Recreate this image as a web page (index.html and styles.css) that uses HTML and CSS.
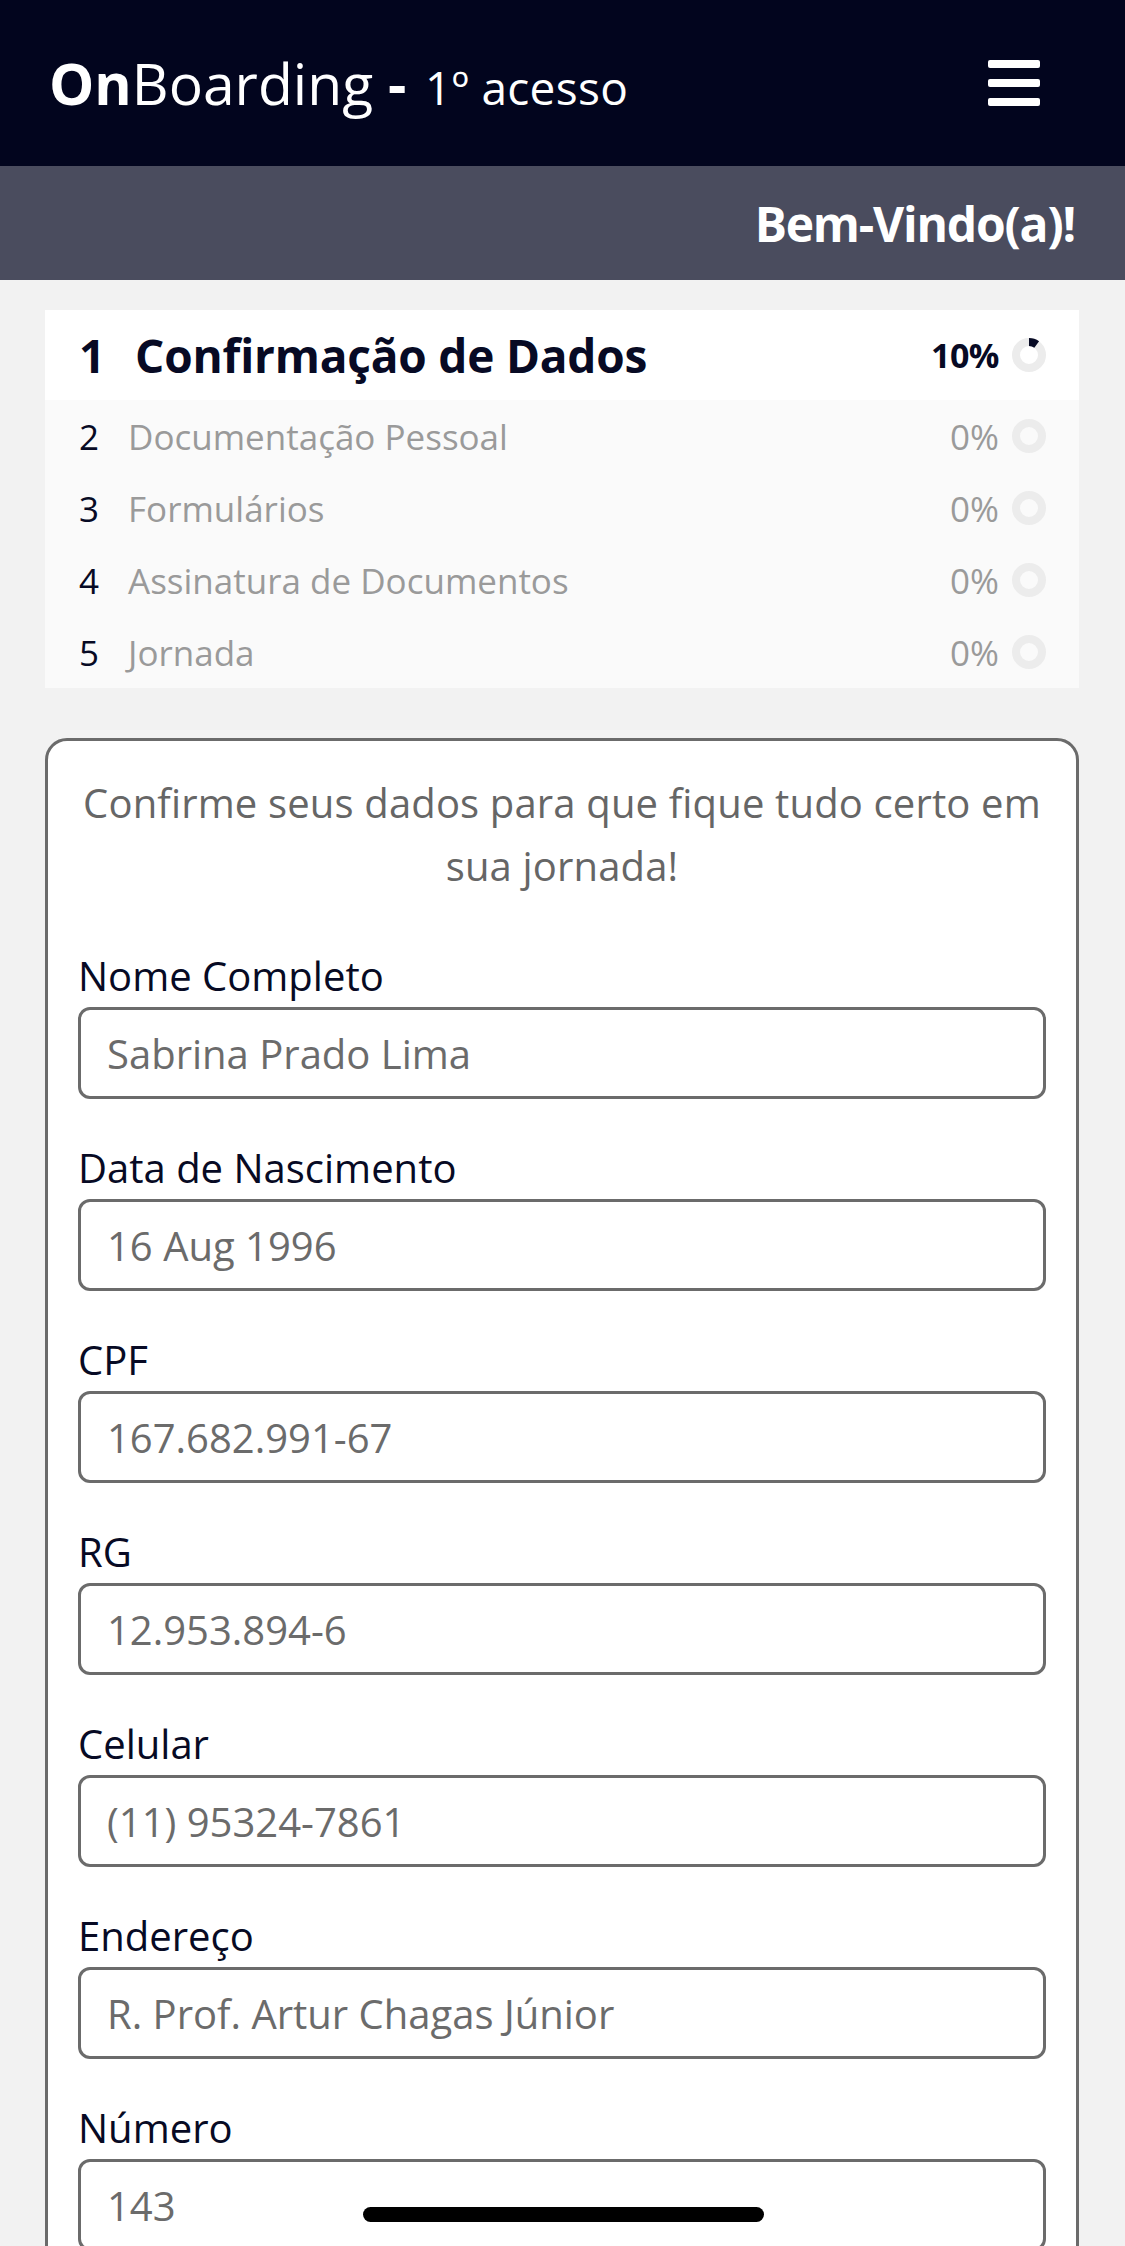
FILE: index.html
```html
<!DOCTYPE html>
<html lang="pt-BR">
<head>
<meta charset="utf-8">
<title>OnBoarding - 1º acesso</title>
<link rel="stylesheet" href="styles.css">
</head>
<body>
<header class="topbar">
  <div class="brand"><b>On</b>Boarding <b>-</b> <span class="brand-sub">1º acesso</span></div>
  <div class="burger" aria-label="menu"><span></span><span></span><span></span></div>
</header>
<div class="welcome">Bem-Vindo(a)!</div>

<main class="main">
  <section class="steps">
    <div class="step step-active">
      <span class="step-num">1</span>
      <span class="step-name">Confirmação de Dados</span>
      <span class="step-pct">10%</span>
      <svg class="ring" viewBox="0 0 36 36" width="36" height="36"><circle cx="18" cy="18" r="13" fill="none" stroke="#ececec" stroke-width="8"/><circle cx="18" cy="18" r="13" fill="none" stroke="#070a24" stroke-width="8" stroke-dasharray="8.2 81.7" transform="rotate(-90 18 18)"/></svg>
    </div>
    <div class="step">
      <span class="step-num">2</span>
      <span class="step-name">Documentação Pessoal</span>
      <span class="step-pct">0%</span>
      <svg class="ring" viewBox="0 0 36 36" width="36" height="36"><circle cx="18" cy="18" r="13" fill="none" stroke="#ececec" stroke-width="8"/></svg>
    </div>
    <div class="step">
      <span class="step-num">3</span>
      <span class="step-name">Formulários</span>
      <span class="step-pct">0%</span>
      <svg class="ring" viewBox="0 0 36 36" width="36" height="36"><circle cx="18" cy="18" r="13" fill="none" stroke="#ececec" stroke-width="8"/></svg>
    </div>
    <div class="step">
      <span class="step-num">4</span>
      <span class="step-name">Assinatura de Documentos</span>
      <span class="step-pct">0%</span>
      <svg class="ring" viewBox="0 0 36 36" width="36" height="36"><circle cx="18" cy="18" r="13" fill="none" stroke="#ececec" stroke-width="8"/></svg>
    </div>
    <div class="step">
      <span class="step-num">5</span>
      <span class="step-name">Jornada</span>
      <span class="step-pct">0%</span>
      <svg class="ring" viewBox="0 0 36 36" width="36" height="36"><circle cx="18" cy="18" r="13" fill="none" stroke="#ececec" stroke-width="8"/></svg>
    </div>
  </section>

  <form class="card">
    <p class="intro">Confirme seus dados para que fique tudo certo em sua jornada!</p>
    <div class="fields">
      <label class="field"><span class="field-label">Nome Completo</span><input class="field-input" type="text" value="Sabrina Prado Lima" readonly></label>
      <label class="field"><span class="field-label">Data de Nascimento</span><input class="field-input" type="text" value="16 Aug 1996" readonly></label>
      <label class="field"><span class="field-label">CPF</span><input class="field-input" type="text" value="167.682.991-67" readonly></label>
      <label class="field"><span class="field-label">RG</span><input class="field-input" type="text" value="12.953.894-6" readonly></label>
      <label class="field"><span class="field-label">Celular</span><input class="field-input" type="text" value="(11) 95324-7861" readonly></label>
      <label class="field"><span class="field-label">Endereço</span><input class="field-input" type="text" value="R. Prof. Artur Chagas Júnior" readonly></label>
      <label class="field"><span class="field-label">Número</span><input class="field-input" type="text" value="143" readonly></label>
    </div>
  </form>
</main>

<div class="home-indicator"></div>
</body>
</html>
```

FILE: styles.css
```css
* { box-sizing: border-box; }

html, body {
  margin: 0;
  padding: 0;
}

body {
  background: #f2f2f2;
  font-family: "Open Sans", "Noto Sans", sans-serif;
  color: #070a24;
}

.topbar {
  height: 166px;
  background: #02051e;
  display: flex;
  align-items: center;
  justify-content: space-between;
  padding: 0 85px 0 49px;
}

.brand {
  color: #fff;
  font-size: 57px;
  line-height: 1;
  font-weight: 400;
  white-space: nowrap;
}

.brand b { font-weight: 700; }

.brand-sub {
  font-size: 46px;
  margin-left: 4px;
  letter-spacing: 0.3px;
}

.burger {
  width: 52px;
  display: flex;
  flex-direction: column;
  gap: 11px;
}

.burger span {
  display: block;
  height: 8px;
  background: #fff;
  border-radius: 2px;
}

.welcome {
  height: 114px;
  background: #4a4c5e;
  color: #fff;
  font-weight: 700;
  font-size: 48px;
  letter-spacing: -1.2px;
  display: flex;
  align-items: center;
  justify-content: flex-end;
  padding-right: 50px;
}

.main {
  padding: 30px 46px 0 45px;
}

.steps {
  background: #fafafa;
}

.step {
  height: 72px;
  display: flex;
  align-items: center;
  padding: 0 32px 0 34px;
  font-size: 35px;
}

.step-num {
  color: #070a24;
  margin-right: 29px;
}

.step-name {
  flex: 1;
  color: #9a9a9a;
}

.step-pct {
  color: #9a9a9a;
  margin-right: 12px;
}

.step-active {
  height: 90px;
  background: #fff;
  font-weight: 700;
  font-size: 46px;
  letter-spacing: -0.2px;
}

.step-active .step-num { margin-right: 30px; }

.step-active .step-name { color: #070a24; }

.step-active .step-pct {
  color: #070a24;
  font-size: 34px;
  letter-spacing: -0.5px;
}

.ring {
  display: block;
  flex: none;
}

.card {
  margin: 50px 0 0;
  background: #fff;
  border: 3px solid #6b6b6b;
  border-radius: 22px;
  padding: 30px 30px 40px;
}

.intro {
  margin: 0 0 51px;
  text-align: center;
  color: #666;
  font-size: 40px;
  letter-spacing: 0.15px;
  line-height: 63px;
}

.fields {
  display: flex;
  flex-direction: column;
  gap: 41px;
}

.field {
  display: flex;
  flex-direction: column;
  gap: 4px;
}

.field-label {
  font-size: 40px;
  line-height: 55px;
  color: #070a24;
}

.field-input {
  height: 92px;
  width: 100%;
  border: 3px solid #6b6b6b;
  border-radius: 12px;
  padding: 0 26px;
  font-family: "Open Sans", "Noto Sans", sans-serif;
  font-size: 40px;
  color: #6b6b6b;
  background: #fff;
  outline: none;
}

.home-indicator {
  position: fixed;
  left: 50%;
  bottom: 24px;
  width: 401px;
  height: 15px;
  margin-left: -200px;
  background: #000;
  border-radius: 8px;
}
```
